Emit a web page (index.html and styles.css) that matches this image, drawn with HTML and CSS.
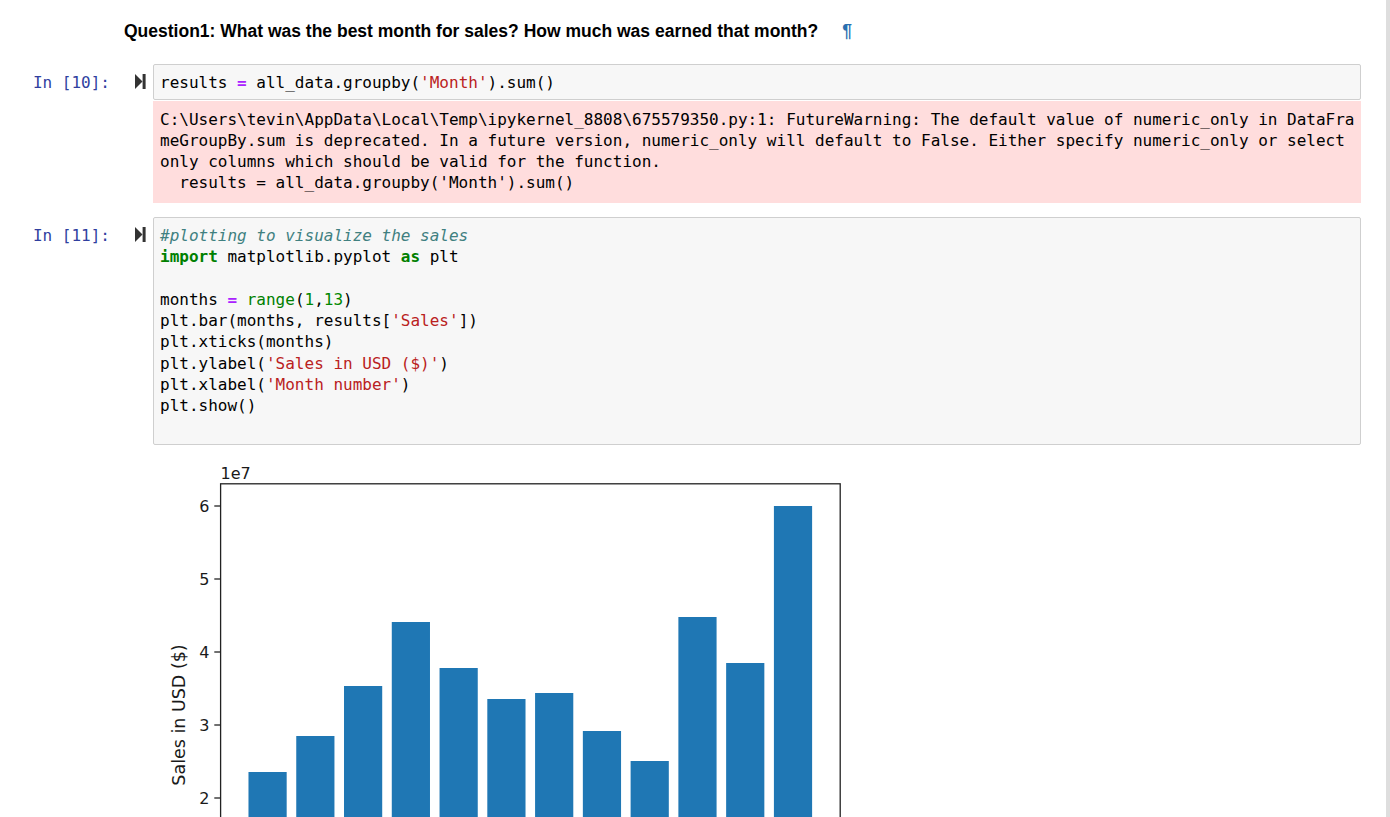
FILE: index.html
```html
<!DOCTYPE html>
<html lang="en">
<head>
<meta charset="utf-8">
<title>Notebook</title>
<link rel="stylesheet" href="styles.css">
</head>
<body>
<div class="nb">
  <div class="md">
    <h3>Question1: What was the best month for sales? How much was earned that month?<a class="anchor" href="#q1">¶</a></h3>
  </div>

  <div class="cell c10">
    <div class="row">
      <div class="prompt">In [10]:</div>
      <div class="run"><svg width="11" height="15" viewBox="0 0 11 15"><polygon points="0,0 7.5,7.5 0,15" fill="#333"/><rect x="7.6" y="0" width="3" height="15" fill="#333"/></svg></div>
      <div class="input"><pre>results <span class="o">=</span> all_data.groupby(<span class="s">'Month'</span>).sum()</pre></div>
    </div>
    <div class="row out">
      <div class="gutter"></div>
      <div class="stderr"><pre>C:\Users\tevin\AppData\Local\Temp\ipykernel_8808\675579350.py:1: FutureWarning: The default value of numeric_only in DataFra
meGroupBy.sum is deprecated. In a future version, numeric_only will default to False. Either specify numeric_only or select
only columns which should be valid for the function.
  results = all_data.groupby('Month').sum()</pre></div>
    </div>
  </div>

  <div class="cell c11">
    <div class="row">
      <div class="prompt">In [11]:</div>
      <div class="run"><svg width="11" height="15" viewBox="0 0 11 15"><polygon points="0,0 7.5,7.5 0,15" fill="#333"/><rect x="7.6" y="0" width="3" height="15" fill="#333"/></svg></div>
      <div class="input"><pre><span class="c">#plotting to visualize the sales</span>
<span class="k">import</span> matplotlib.pyplot <span class="k">as</span> plt

months <span class="o">=</span> <span class="b">range</span>(<span class="n">1</span>,<span class="n">13</span>)
plt.bar(months, results[<span class="s">'Sales'</span>])
plt.xticks(months)
plt.ylabel(<span class="s">'Sales in USD ($)'</span>)
plt.xlabel(<span class="s">'Month number'</span>)
plt.show()

</pre></div>
    </div>
    <div class="row chart-row">
      <div class="gutter"></div>
      <svg class="chart" width="700" height="500" viewBox="0 0 700 500">
        <g fill="#1f77b4">
          <rect x="95.48" y="320" width="38.2" height="172"/>
          <rect x="143.25" y="284" width="38.2" height="208"/>
          <rect x="191.01" y="234" width="38.2" height="258"/>
          <rect x="238.78" y="170" width="38.2" height="322"/>
          <rect x="286.55" y="216" width="38.2" height="276"/>
          <rect x="334.31" y="247" width="38.2" height="245"/>
          <rect x="382.08" y="241" width="38.2" height="251"/>
          <rect x="429.85" y="279" width="38.2" height="213"/>
          <rect x="477.61" y="309" width="38.2" height="183"/>
          <rect x="525.38" y="165" width="38.2" height="327"/>
          <rect x="573.14" y="211" width="38.2" height="281"/>
          <rect x="620.91" y="54" width="38.2" height="438"/>
        </g>
        <rect x="67.6" y="31.8" width="619.6" height="460.2" fill="none" stroke="#222" stroke-width="1.3"/>
        <g stroke="#222" stroke-width="1.3">
          <line x1="61.3" y1="54" x2="67.6" y2="54"/>
          <line x1="61.3" y1="127" x2="67.6" y2="127"/>
          <line x1="61.3" y1="200" x2="67.6" y2="200"/>
          <line x1="61.3" y1="273" x2="67.6" y2="273"/>
          <line x1="61.3" y1="346" x2="67.6" y2="346"/>
          <line x1="61.3" y1="419" x2="67.6" y2="419"/>
        </g>
        <g class="tick" text-anchor="end">
          <text x="56.5" y="59.8">6</text>
          <text x="56.5" y="132.8">5</text>
          <text x="56.5" y="205.8">4</text>
          <text x="56.5" y="278.8">3</text>
          <text x="56.5" y="351.8">2</text>
          <text x="56.5" y="424.8">1</text>
        </g>
        <text class="tick" x="67.5" y="26.5">1e7</text>
        <text class="ylabel" x="0" y="0" text-anchor="middle" transform="translate(32 263) rotate(-90)">Sales in USD ($)</text>
      </svg>
    </div>
  </div>
</div>
<div class="edge"></div>
</body>
</html>
```
FILE: styles.css
```css
html, body {
  margin: 0;
  padding: 0;
  background: #fff;
}

body {
  display: flex;
  font-family: "Liberation Sans", Arial, sans-serif;
  color: #000;
}

.nb {
  flex: 1;
  padding-right: 25px;
}

.edge {
  width: 4px;
  background: #dedede;
}

.md {
  padding: 21px 0 0 124px;
}

.md h3 {
  margin: 0;
  font-size: 17.5px;
  line-height: 20px;
  font-weight: bold;
}

.anchor {
  margin-left: 24px;
  color: #2a6fb0;
  text-decoration: none;
  font-weight: bold;
}

.cell.c10 {
  margin-top: 23px;
}

.cell.c11 {
  margin-top: 14px;
}

.row {
  display: flex;
  align-items: flex-start;
}

pre {
  margin: 0;
  font-family: "DejaVu Sans Mono", "Liberation Mono", monospace;
  font-size: 16px;
  line-height: 21.33px;
  white-space: pre;
}

.prompt {
  width: 110px;
  flex: none;
  text-align: right;
  padding-top: 8px;
  font-family: "DejaVu Sans Mono", "Liberation Mono", monospace;
  font-size: 16px;
  line-height: 21.33px;
  color: #303f9f;
}

.run {
  width: 43px;
  flex: none;
  box-sizing: border-box;
  padding: 10px 0 0 25px;
  line-height: 0;
}

.input {
  flex: 1;
  min-width: 0;
  border: 1px solid #cfcfcf;
  border-radius: 2px;
  background: #f7f7f7;
  padding: 7px 6px 5.5px 6px;
}

.gutter {
  width: 153px;
  flex: none;
}

.out {
  margin-top: 1px;
}

.stderr {
  flex: 1;
  min-width: 0;
  background: #fdd;
  padding: 8px 7px 10px 7px;
}

.stderr pre {
  line-height: 21px;
  overflow: visible;
}

.chart-row {
  margin-top: 7px;
}

.chart {
  display: block;
  flex: none;
}

.tick {
  font-family: "DejaVu Sans", sans-serif;
  font-size: 16px;
  fill: #1a1a1a;
}

.ylabel {
  font-family: "DejaVu Sans", sans-serif;
  font-size: 17.5px;
  fill: #1a1a1a;
}

.o { color: #aa22ff; font-weight: bold; }
.s { color: #ba2121; }
.c { color: #408080; font-style: italic; }
.k { color: #008000; font-weight: bold; }
.b { color: #008000; }
.n { color: #008800; }
```
